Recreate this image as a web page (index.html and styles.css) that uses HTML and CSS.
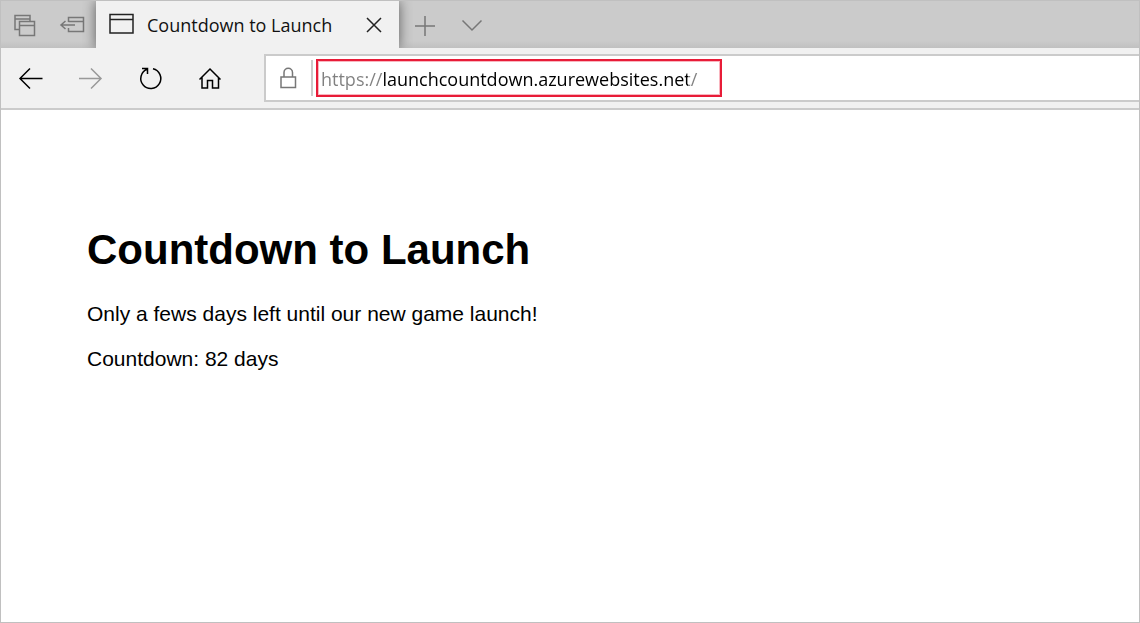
FILE: index.html
```html
<!DOCTYPE html>
<html lang="en">
<head>
<meta charset="utf-8">
<title>Countdown to Launch</title>
<link rel="stylesheet" href="styles.css">
</head>
<body>
<div class="browser">
  <header class="tabstrip">
    <div class="tab-tools">
      <button class="icon-button" aria-label="Tabs you've set aside">
        <svg width="24" height="24" viewBox="0 0 24 24"><path d="M6 16.500H2V2.500H17V8M2 6H17M6.500 8.500H21.500V22.500H6.500ZM6.500 12.500H21.500"/></svg>
      </button>
      <button class="icon-button" aria-label="Set these tabs aside">
        <svg width="26" height="24" viewBox="0 0 26 24"><path d="M9.500 9V4.500H24.500V18.500H9.500V15M9.500 8.500H24.500M2 12H16M6.500 8L2 12L6.500 16"/></svg>
      </button>
    </div>
    <div class="tab">
      <svg class="tab-icon" width="26" height="24" viewBox="0 0 26 24"><path d="M2 1.500H25V20H2ZM2 6.500H25"/></svg>
      <span class="tab-title">Countdown to Launch</span>
      <button class="icon-button tab-close" aria-label="Close tab">
        <svg width="20" height="20" viewBox="0 0 20 20"><path d="M3 3L17 17M17 3L3 17"/></svg>
      </button>
    </div>
    <div class="tab-actions">
      <button class="icon-button" aria-label="New tab">
        <svg width="22" height="22" viewBox="0 0 22 22"><path d="M1 12H21M11 2V22"/></svg>
      </button>
      <button class="icon-button" aria-label="Show tab previews">
        <svg width="22" height="22" viewBox="0 0 22 22"><path d="M1.500 6.500L11 16L20.500 6.500"/></svg>
      </button>
    </div>
  </header>
  <nav class="toolbar" aria-label="Navigation">
    <div class="nav-buttons">
      <button class="icon-button" aria-label="Back">
        <svg width="26" height="24" viewBox="0 0 26 24"><path d="M2 12.500H24.500M12 2.500L2 12.500L12 22.500"/></svg>
      </button>
      <button class="icon-button forward" aria-label="Forward">
        <svg width="26" height="24" viewBox="0 0 26 24"><path d="M1 12.500H23.500M13 2.500L23 12.500L13 22.500"/></svg>
      </button>
      <button class="icon-button" aria-label="Refresh">
        <svg width="26" height="24" viewBox="0 0 26 24"><path d="M15 2.800A10 10 0 1 1 9 3.300M4 2.500H9.500V8"/></svg>
      </button>
      <button class="icon-button" aria-label="Home">
        <svg width="26" height="24" viewBox="0 0 26 24"><path d="M1.500 13.500L12 3L22.500 13.500M4 11.500V22H9.500V14.500H14.500V22H20.500V11.500"/></svg>
      </button>
    </div>
    <div class="address-bar">
      <button class="icon-button lock" aria-label="Site information">
        <svg width="20" height="24" viewBox="0 0 20 24"><path d="M2 11H16.500V21.500H2ZM5 11V6.500A4.200 4.200 0 0 1 13.500 6.500V11"/></svg>
      </button>
      <input class="address" type="text" aria-label="Address" spellcheck="false" value="https://launchcountdown.azurewebsites.net/">
    </div>
  </nav>
  <main class="page">
    <h1>Countdown to Launch</h1>
    <p>Only a fews days left until our new game launch!</p>
    <p>Countdown: 82 days</p>
  </main>
</div>
</body>
</html>
```
FILE: styles.css
```css
* {
  box-sizing: border-box;
}

body {
  margin: 0;
  background: #fff;
}

.browser {
  display: flex;
  flex-direction: column;
  min-height: 100vh;
  border: 1px solid #c0c0c0;
  font-family: "Open Sans", "Noto Sans", sans-serif;
  font-size: 18px;
}

.icon-button {
  display: flex;
  align-items: center;
  justify-content: center;
  padding: 0;
  border: 0;
  background: none;
  color: inherit;
}

svg {
  flex: none;
  fill: none;
  stroke: currentColor;
  stroke-width: 1.5;
}

.tabstrip {
  display: flex;
  height: 47px;
  background: linear-gradient(#cbcbcb 40px, #c0c0c0);
  color: #777;
}

.tab-tools {
  display: flex;
  align-items: center;
  gap: 22px;
  width: 95px;
  padding-left: 12px;
}

.tab {
  display: flex;
  align-items: center;
  width: 303px;
  padding: 0 15px 0 12px;
  background: #f1f1f1;
  box-shadow: 0 0 12px rgba(0, 0, 0, 0.55);
  clip-path: inset(0 -14px);
  color: #222;
}

.tab-title {
  flex: 1;
  margin-left: 13px;
  color: #111;
  white-space: nowrap;
}

.tab-actions {
  display: flex;
  align-items: center;
  gap: 25px;
  padding-left: 15px;
}

.toolbar {
  display: flex;
  align-items: center;
  height: 62px;
  border-bottom: 2px solid #cbcbcb;
  background: #f1f1f1;
}

.nav-buttons {
  display: flex;
  gap: 34px;
  width: 263px;
  padding-left: 17px;
  color: #000;
}

.forward {
  color: #999;
}

.address-bar {
  display: flex;
  flex: 1;
  align-items: center;
  height: 48px;
  border: 2px solid #cbcbcb;
  border-right: 0;
  background: #fff;
}

.lock {
  width: 47px;
  height: 36px;
  border-right: 2px solid #cbcbcb;
  color: #777;
}

.address {
  width: 406px;
  height: 38px;
  margin-left: 3px;
  padding: 2px 3px 0;
  border: 2px solid #e81c38;
  outline: 1px solid #f9b5bf;
  outline-offset: -3px;
  background: linear-gradient(90deg, #808080 64px, #000 64px, #000 370px, #808080 370px) text;
  color: transparent;
  font: inherit;
}

.page {
  flex: 1;
  padding: 115px 86px 40px;
  color: #000;
  font-family: "Liberation Sans", Arial, sans-serif;
  font-size: 21px;
  line-height: 24px;
}

h1 {
  margin: 0 0 28px;
  font-size: 42px;
  line-height: 49px;
}

p {
  margin: 0 0 21px;
}
```
